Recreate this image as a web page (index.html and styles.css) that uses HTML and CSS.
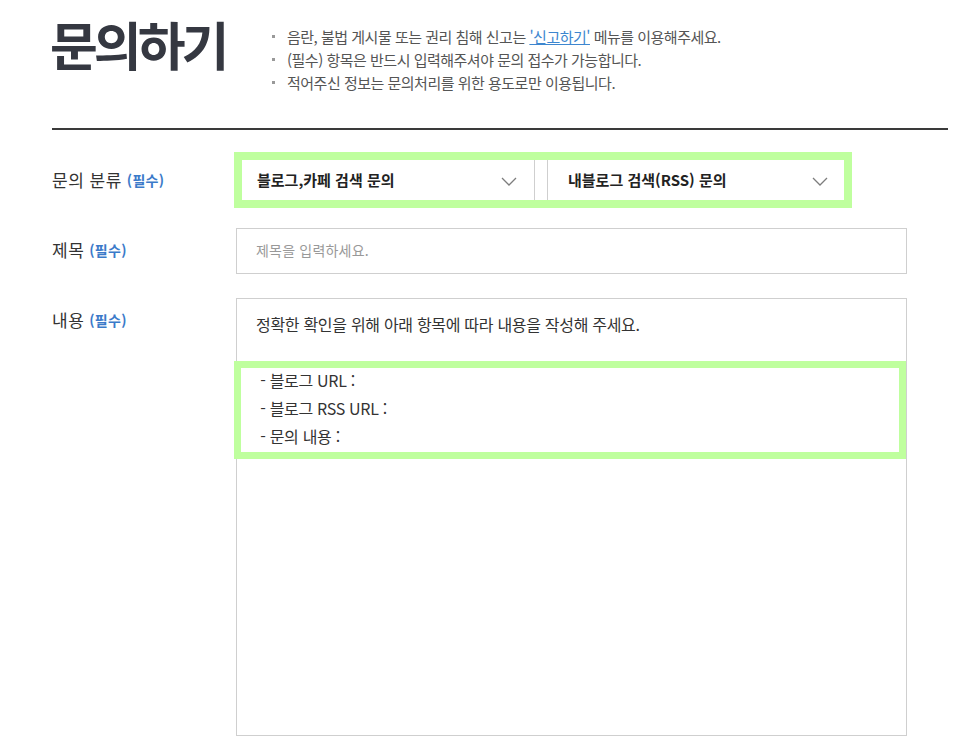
FILE: index.html
```html
<!DOCTYPE html>
<html lang="ko">
<head>
<meta charset="utf-8">
<title>문의하기</title>
<link rel="stylesheet" href="styles.css">
</head>
<body>
<div class="page">
  <header class="head">
    <h1 class="title">문의하기</h1>
    <ul class="notice">
      <li>음란, 불법 게시물 또는 권리 침해 신고는 <a class="link" href="#">'신고하기'</a> 메뉴를 이용해주세요.</li>
      <li>(필수) 항목은 반드시 입력해주셔야 문의 접수가 가능합니다.</li>
      <li>적어주신 정보는 문의처리를 위한 용도로만 이용됩니다.</li>
    </ul>
  </header>
  <form class="form">
    <div class="row">
      <div class="label">문의 분류 <em class="req">(필수)</em></div>
      <div class="field">
        <div class="selects">
          <div class="select">
            <span class="select-text">블로그,카페 검색 문의</span>
            <svg class="chev" width="16" height="9" viewBox="0 0 16 9"><path d="M1 1l7 7 7-7" fill="none" stroke="#7d7d7d" stroke-width="1.3"/></svg>
          </div>
          <div class="select">
            <span class="select-text">내블로그 검색(RSS) 문의</span>
            <svg class="chev" width="16" height="9" viewBox="0 0 16 9"><path d="M1 1l7 7 7-7" fill="none" stroke="#7d7d7d" stroke-width="1.3"/></svg>
          </div>
        </div>
        <span class="hl hl-select"></span>
      </div>
    </div>
    <div class="row">
      <div class="label">제목 <em class="req">(필수)</em></div>
      <div class="field">
        <input class="input" type="text" placeholder="제목을 입력하세요.">
      </div>
    </div>
    <div class="row">
      <div class="label">내용 <em class="req">(필수)</em></div>
      <div class="field">
        <textarea class="textarea">정확한 확인을 위해 아래 항목에 따라 내용을 작성해 주세요.

 - 블로그 URL :
 - 블로그 RSS URL :
 - 문의 내용 :</textarea>
        <span class="hl hl-text"></span>
      </div>
    </div>
  </form>
</div>
</body>
</html>
```

FILE: styles.css
```css
* { box-sizing: border-box; }
html, body { margin: 0; padding: 0; background: #fff; }
body {
  font-family: "Noto Sans CJK KR", "Noto Sans", sans-serif;
  color: #333;
}
.page {
  width: 896px;
  margin-left: 52px;
}
.head {
  display: flex;
  align-items: flex-start;
  height: 130px;
  border-bottom: 2px solid #3a3a3a;
}
.title {
  margin: 14px 0 0 -2px;
  font-size: 52px;
  line-height: 60px;
  font-weight: 700;
  letter-spacing: -4px;
  color: #353841;
  width: 222px;
  flex: none;
}
.notice {
  list-style: none;
  margin: 25px 0 0 0;
  padding: 0;
  font-size: 15px;
  line-height: 23px;
  letter-spacing: -0.5px;
  color: #555;
}
.notice li {
  position: relative;
  padding-left: 15px;
}
.notice li::before {
  content: "";
  position: absolute;
  left: 0;
  top: 10px;
  width: 3px;
  height: 3px;
  background: #999;
}
.link {
  color: #3d86cf;
  text-decoration: underline;
}
.form {
  padding-top: 28px;
}
.row {
  display: flex;
  align-items: flex-start;
  margin-bottom: 24px;
}
.label {
  width: 184px;
  height: 46px;
  flex: none;
  display: flex;
  align-items: center;
  gap: 5px;
  padding-bottom: 2px;
  font-size: 17px;
  line-height: 24px;
  letter-spacing: 0.5px;
  color: #333;
}
.req {
  font-style: normal;
  font-weight: 700;
  font-size: 14px;
  line-height: 24px;
  color: #3b7ac9;
  letter-spacing: 0.3px;
}
.field {
  position: relative;
  width: 671px;
}
.selects {
  display: flex;
  gap: 12px;
}
.select {
  width: 299px;
  height: 46px;
  border: 1px solid #cfcfcf;
  display: flex;
  align-items: center;
  justify-content: space-between;
  padding: 0 17px 0 20px;
}
.select-text {
  font-size: 15px;
  font-weight: 700;
  color: #222;
  letter-spacing: 0;
  line-height: 24px;
  padding-bottom: 3px;
}
.chev { display: block; }
.input {
  display: block;
  width: 100%;
  height: 46px;
  border: 1px solid #cfcfcf;
  padding: 0 19px 3px;
  font-family: inherit;
  font-size: 14px;
  letter-spacing: 0.2px;
  color: #333;
  outline: none;
  margin: 0;
}
.input::placeholder { color: #999; }
.textarea {
  display: block;
  width: 100%;
  height: 438px;
  border: 1px solid #cfcfcf;
  padding: 11px 19px;
  font-family: inherit;
  font-size: 16px;
  line-height: 28px;
  letter-spacing: -0.3px;
  color: #333;
  resize: none;
  outline: none;
  overflow: hidden;
  margin: 0;
}
.hl {
  position: absolute;
  border-style: solid;
  border-color: #bfff9e;
  pointer-events: none;
}
.hl-select {
  left: -2px;
  top: -6px;
  width: 618px;
  height: 56px;
  border-width: 8px;
}
.hl-text {
  left: -2px;
  top: 63px;
  width: 672px;
  height: 98px;
  border-width: 7px;
}
```
